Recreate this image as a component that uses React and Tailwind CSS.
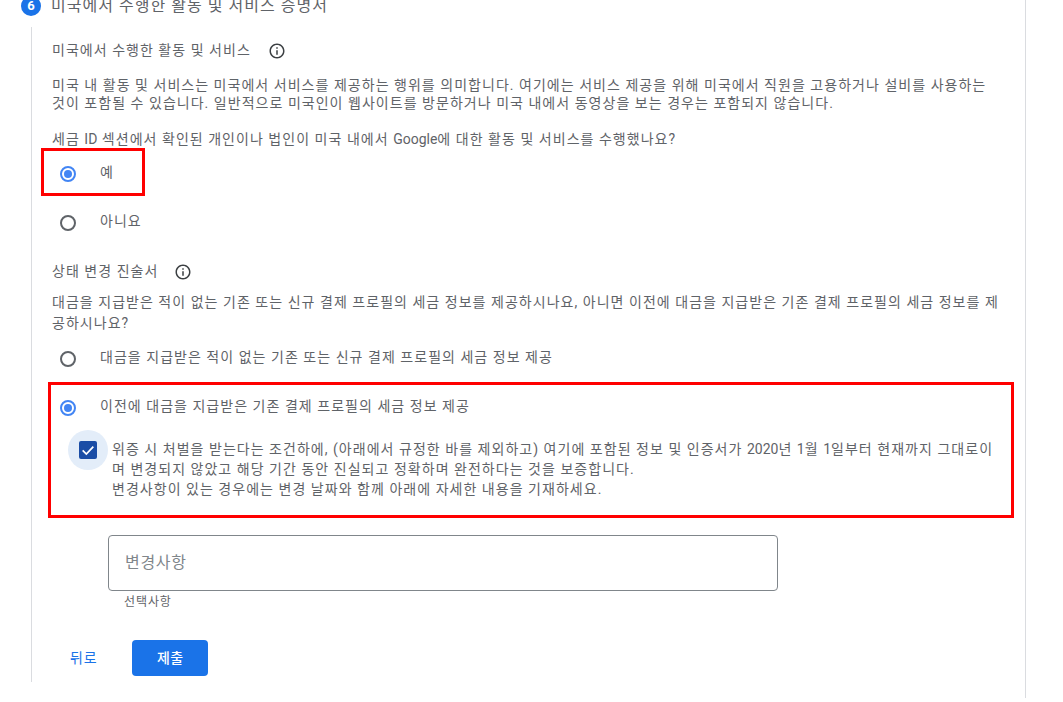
import React from 'react';

const font = { fontFamily: 'Roboto, "Noto Sans CJK KR", sans-serif' };

function InfoIcon() {
  return (
    <svg width="18" height="18" viewBox="0 0 24 24" fill="#3c4043">
      <path d="M11 7h2v2h-2zm0 4h2v6h-2zm1-9C6.48 2 2 6.48 2 12s4.48 10 10 10 10-4.48 10-10S17.52 2 12 2zm0 18c-4.41 0-8-3.59-8-8s3.59-8 8-8 8 3.59 8 8-3.59 8-8 8z" />
    </svg>
  );
}

function Radio({ checked }) {
  if (checked) {
    return (
      <span className="w-4 h-4 mt-[3px] shrink-0 rounded-full border-2 border-[#4285f4] flex items-center justify-center">
        <span className="w-2 h-2 rounded-full bg-[#4285f4]"></span>
      </span>
    );
  }
  return <span className="w-4 h-4 mt-[3px] shrink-0 rounded-full border-2 border-[#5f6368]"></span>;
}

function RadioRow({ checked, label, className = '' }) {
  return (
    <div className={`flex items-center h-6 ${className}`}>
      <Radio checked={checked} />
      <span className="ml-[24px]">{label}</span>
    </div>
  );
}

export default function App() {
  return (
    <div style={font} className="w-[1063px] h-[702px] overflow-hidden bg-white text-[#5f6368] text-[14px] tracking-[1.03px]">
      <div className="w-[1026px] h-[702px] border-r border-[#dadce0]">
        {/* step header, only partly inside the window */}
        <div className="flex items-center gap-[10px] ml-[21px] -mt-[4px] h-5">
          <span className="w-5 h-5 rounded-full bg-[#1a73e8] text-white text-[13px] tracking-normal font-bold flex items-center justify-center">6</span>
          <span className="text-[16px]">미국에서 수행한 활동 및 서비스 승명서</span>
        </div>

        <div className="ml-[31px] mt-[11px] h-[655px] border-l border-[#dadce0] pl-[20px] pr-[11px] pt-[11px]">
          <div className="flex items-center h-6">
            <span>미국에서 수행한 활동 및 서비스</span>
            <span className="ml-[17px] mt-[1px] flex"><InfoIcon /></span>
          </div>

          <p className="mt-[14px] leading-[18px]">
            미국 내 활동 및 서비스는 미국에서 서비스를 제공하는 행위를 의미합니다. 여기에는 서비스 제공을 위해 미국에서 직원을 고용하거나 설비를 사용하는
            <br />
            것이 포함될 수 있습니다. 일반적으로 미국인이 웹사이트를 방문하거나 미국 내에서 동영상을 보는 경우는 포함되지 않습니다.
          </p>

          <p className="mt-[18px] leading-[19px]">
            세금 <span className="tracking-normal">ID</span> 섹션에서 확인된 개인이나 법인이 미국 내에서 <span className="tracking-normal">Google</span>에 대한 활동 및 서비스를 수행했나요?
          </p>

          <div className="-ml-[11px] -mt-[1px] w-[104px] h-[48px] border-[3px] border-[#ff0000] flex items-center pl-[16px]">
            <Radio checked />
            <span className="ml-[24px]">예</span>
          </div>

          <RadioRow label="아니요" className="mt-[13px] ml-[8px]" />

          <div className="flex items-center h-6 mt-[26px]">
            <span>상태 변경 진술서</span>
            <span className="ml-[16px] mt-[1px] flex"><InfoIcon /></span>
          </div>

          <p className="mt-[9px] leading-[21px]">
            대금을 지급받은 적이 없는 기존 또는 신규 결제 프로필의 세금 정보를 제공하시나요, 아니면 이전에 대금을 지급받은 기존 결제 프로필의 세금 정보를 제
            <br />
            공하시나요?
          </p>

          <RadioRow label="대금을 지급받은 적이 없는 기존 또는 신규 결제 프로필의 세금 정보 제공" className="mt-[11px] ml-[8px]" />

          <div className="-ml-[4px] mt-[13px] w-[966px] h-[136px] border-[3px] border-[#ff0000] pl-[9px] pt-[9px]">
            <RadioRow checked label="이전에 대금을 지급받은 기존 결제 프로필의 세금 정보 제공" />
            <div className="flex mt-[12px] ml-[8px]">
              <span className="w-10 h-10 shrink-0 rounded-full bg-[#e3edf9] flex items-center justify-center">
                <span className="w-[18px] h-[18px] rounded-[2px] bg-[#1a4da6] flex items-center justify-center">
                  <svg width="16" height="16" viewBox="0 0 24 24" fill="none" stroke="white" strokeWidth="2.6">
                    <path d="M4 12.5l5.5 5.5L20 7" />
                  </svg>
                </span>
              </span>
              <p className="ml-[4px] mt-[9px] leading-[20px]">
                위증 시 처벌을 받는다는 조건하에, (아래에서 규정한 바를 제외하고) 여기에 포함된 정보 및 인증서가 <span className="tracking-normal">2020</span>년 <span className="tracking-normal">1</span>월 <span className="tracking-normal">1</span>일부터 현재까지 그대로이
                <br />
                며 변경되지 않았고 해당 기간 동안 진실되고 정확하며 완전하다는 것을 보증합니다.
                <br />
                변경사항이 있는 경우에는 변경 날짜와 함께 아래에 자세한 내용을 기재하세요.
              </p>
            </div>
          </div>

          <div className="ml-[56px] mt-[17px] w-[670px] h-[56px] rounded-[4px] border border-[#80868b] flex items-center pl-[16px] text-[16px] tracking-[0.7px] text-[#80868b]">
            변경사항
          </div>
          <div className="ml-[72px] mt-[3px] text-[12px] tracking-[0.9px] leading-[16px]">선택사항</div>

          <div className="flex items-center mt-[30px] ml-[18px]">
            <span className="text-[#1a73e8] tracking-[0.8px]">뒤로</span>
            <span className="ml-[35px] w-[76px] h-[36px] rounded-[4px] bg-[#1a73e8] text-white text-[14px] tracking-[0.5px] font-medium flex items-center justify-center">제출</span>
          </div>
        </div>
      </div>
    </div>
  );
}
